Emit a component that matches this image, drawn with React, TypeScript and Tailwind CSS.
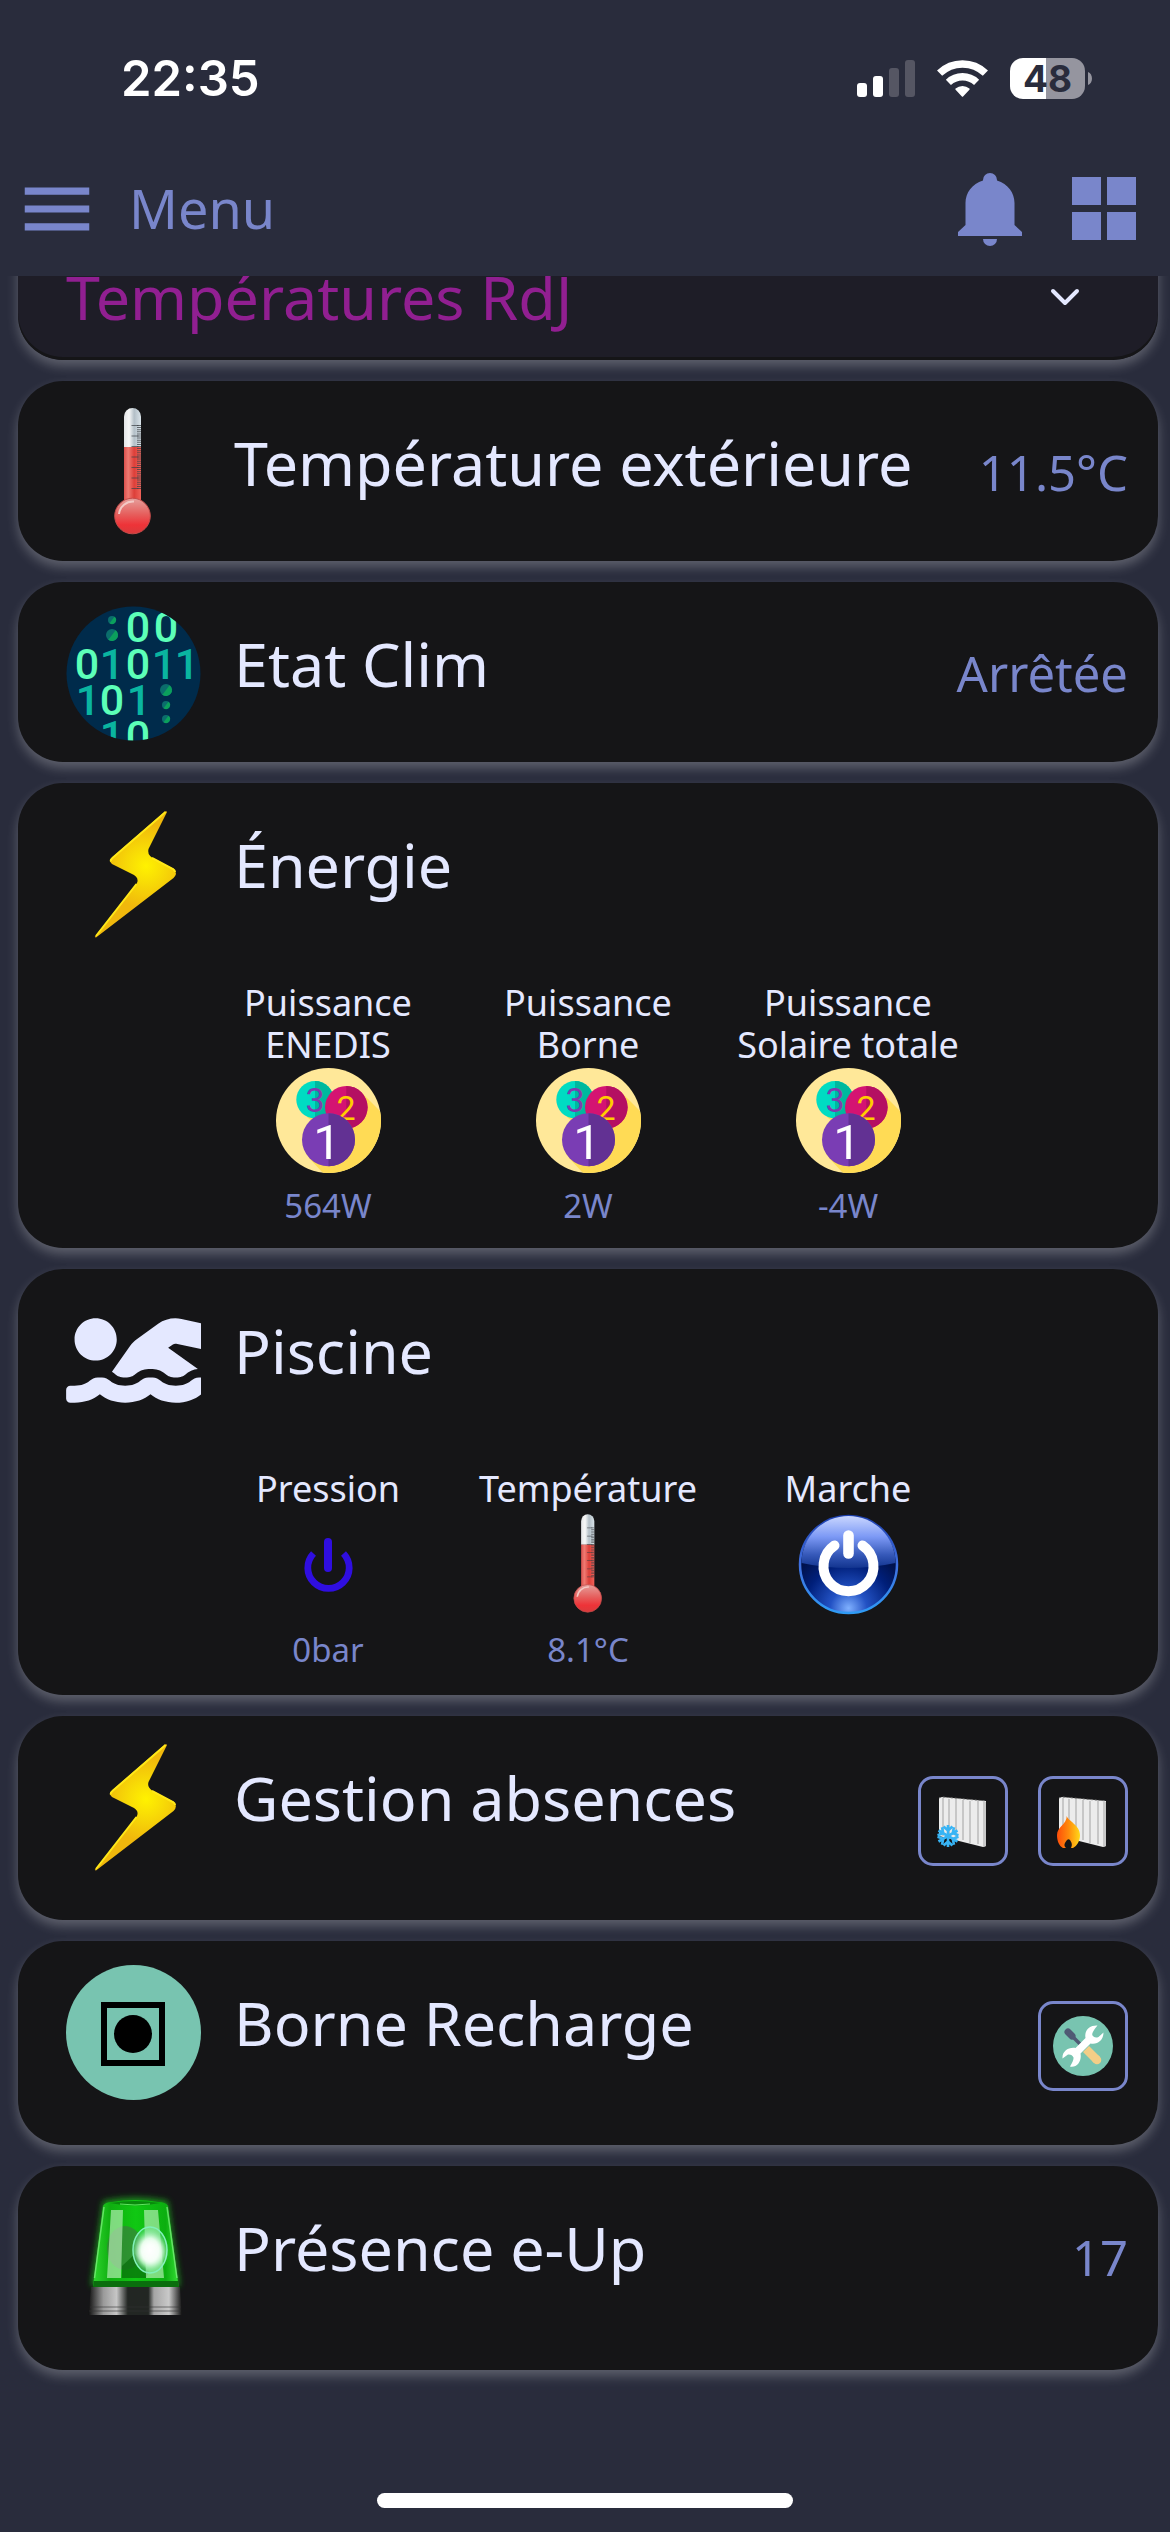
import React, { useId } from "react";
import { FaSwimmer } from "react-icons/fa";
import { MdMenu } from "react-icons/md";

const StatusBar = () => (
  <div className="flex h-[141px] items-center justify-between pt-4 pl-[121px] pr-[78px]">
    <p className="font-['Inter'] text-[49px] leading-[60px] font-semibold text-white">
      22:35
    </p>
    <div className="flex items-center">
      <svg width="58" height="38" viewBox="0 0 58 38">
        <rect x="0" y="23" width="10" height="14" rx="3" fill="#fff" />
        <rect x="16" y="16" width="10" height="21" rx="3" fill="#fff" />
        <rect x="32" y="8" width="10" height="29" rx="3" fill="#555663" />
        <rect x="48" y="0" width="10" height="37" rx="3" fill="#555663" />
      </svg>
      <svg className="ml-[22px]" width="51" height="38" viewBox="0 0 51 38">
        <g fill="none" stroke="#fff" strokeWidth="7.4">
          <path d="M2.6 13.2a33 33 0 0 1 45.8 0" />
          <path d="M11.4 22.4a20.5 20.5 0 0 1 28.2 0" />
        </g>
        <path
          d="M18.6 28.6a10.5 10.5 0 0 1 13.8 0 .8 .8 0 0 1 0 1.2l-6.3 6.6a.9 .9 0 0 1-1.2 0l-6.3-6.6a.8 .8 0 0 1 0-1.2Z"
          fill="#fff"
        />
      </svg>
      <div className="ml-[22px] flex items-center">
        <div className="flex h-[41px] w-[75px] items-center justify-center rounded-[13px] bg-[linear-gradient(90deg,#fff_48%,#95959f_48%)] font-['Inter'] text-[37px] leading-[41px] font-bold text-[#292c3c]">
          48
        </div>
        <svg className="ml-[3px]" width="4" height="13" viewBox="0 0 4 13">
          <path d="M0 0c5.300 2 5.300 11 0 13Z" fill="#95959f" />
        </svg>
      </div>
    </div>
  </div>
);

const Header = () => (
  <header className="relative z-10 bg-[#292c3c]">
    <StatusBar />
    <div className="flex h-[135px] items-center justify-between pl-[14px] pr-[34px] text-[#7986cb]">
      <button type="button" className="flex items-center gap-[29px]">
        <MdMenu size={86} />
        <span className="pb-0.5 text-[54px] leading-[72px]">Menu</span>
      </button>
      <div className="flex items-center gap-[50px]">
        <button type="button" aria-label="Notifications">
          <svg width="64" height="74" viewBox="0 0 64 74" fill="currentColor">
            <path d="M25 8a7 7 0 0 1 14 0v.6C50 12 56.500 21 56.500 31v22l7.500 7v4H0v-4l7.500-7V31C7.500 21 14 12 25 8.600Z" />
            <path d="M25 67h14a7 7 0 0 1-14 0Z" />
          </svg>
        </button>
        <button type="button" aria-label="Vues">
          <svg width="64" height="64" viewBox="0 0 64 64" fill="currentColor">
            <path d="M0 0h29v28H0zM35 0h29v28H35zM0 35h29v28H0zM35 35h29v28H35z" />
          </svg>
        </button>
      </div>
    </div>
  </header>
);

const Thermometer = ({ size = 135 }: { size?: number }) => {
  const id = useId();
  return (
    <svg width={size} height={size} viewBox="0 0 135 135">
      <defs>
        <linearGradient id={`${id}g`}>
          <stop offset="0" stopColor="#e2e4e6" />
          <stop offset=".3" stopColor="#f7f8f8" />
          <stop offset=".6" stopColor="#b3bfc7" />
          <stop offset="1" stopColor="#d9e3e9" />
        </linearGradient>
        <linearGradient id={`${id}r`}>
          <stop offset="0" stopColor="#d9504d" />
          <stop offset=".25" stopColor="#ef7a72" />
          <stop offset=".6" stopColor="#dd3f39" />
          <stop offset="1" stopColor="#ef6259" />
        </linearGradient>
        <linearGradient id={`${id}b`} x2="0" y2="1">
          <stop offset="0" stopColor="#e6a09c" />
          <stop offset=".45" stopColor="#e65f5d" />
          <stop offset=".75" stopColor="#ee3338" />
          <stop offset="1" stopColor="#d93a3c" />
        </linearGradient>
      </defs>
      <path d="M58 42V11.500a8.500 8.500 0 0 1 17 0V42Z" fill={`url(#${id}g)`} />
      <path d="M58 42h17v58H58Z" fill={`url(#${id}r)`} />
      <path d="M73 20v65" stroke="#3c4146" strokeWidth="4" strokeDasharray="1 1.100" opacity=".75" />
      <path d="M69 20v65" stroke="#3c4146" strokeWidth="7" strokeDasharray="1 9.500" opacity=".7" />
      <circle cx="66.500" cy="111" r="17.800" fill={`url(#${id}b)`} stroke="#c54b49" />
      <path d="M53 109a14 14 0 0 1 15-12.500" stroke="#f3c9c5" strokeWidth="2" fill="none" />
    </svg>
  );
};

const Bolt = () => {
  const id = useId();
  return (
    <svg width="135" height="135" viewBox="0 0 135 135">
      <defs>
        <radialGradient id={id} gradientUnits="userSpaceOnUse" cx="80" cy="59" r="42">
          <stop offset="0" stopColor="#fff200" />
          <stop offset=".4" stopColor="#f8dc06" />
          <stop offset="1" stopColor="#f0b80c" />
        </radialGradient>
      </defs>
      <path
        d="M99 4.600 46 50.500Q42.500 54 46 57L68 68Q73 71 71 76L28.700 130 30 130.500 107.500 71Q112 66.500 108 62L86 50.500Q81 47 82.500 42L101 5Q100.500 3.500 99 4.600Z"
        fill={`url(#${id})`}
      />
      <path
        d="M99.500 5 47 50.500Q44 53 45 54.500M70.500 77 30 129M86 51l21 11q2 1.500 2 3"
        stroke="#ffe818"
        strokeWidth="2"
        fill="none"
      />
    </svg>
  );
};

const Binary = () => {
  const id = useId();
  const zeros = [[72, 36], [100, 36], [21, 73], [72, 73], [46, 109], [72, 145]];
  const ones = [[46, 73], [98, 73], [121, 73], [22, 109], [73, 109], [46, 145]];
  const dots = [[46, 14, 4], [46, 29, 6], [100, 84, 6], [100, 99, 4], [100, 113, 4]];
  return (
    <svg width="135" height="135" viewBox="0 0 135 135">
      <clipPath id={id}>
        <circle cx="67.500" cy="67.500" r="67" />
      </clipPath>
      <g
        clipPath={`url(#${id})`}
        textAnchor="middle"
        className="font-['Roboto'] text-[43px] font-medium"
      >
        <rect width="135" height="135" fill="#002b4b" />
        {zeros.map(([x, y]) => (
          <text key={`${x}-${y}`} x={x} y={y} fill="#5cffb8">0</text>
        ))}
        {ones.map(([x, y]) => (
          <text key={`${x}-${y}`} x={x} y={y} fill="#0ab5a0">1</text>
        ))}
        {dots.map(([x, y, r]) => (
          <g key={y}>
            <circle cx={x} cy={y} r={r} fill="#0b6d6c" />
            <path
              d={`M${x - r * 0.6} ${y + r * 0.8}A${r} ${r} 0 0 0 ${x + r * 0.6} ${y - r * 0.8}Z`}
              fill="#0ba05c"
            />
          </g>
        ))}
      </g>
    </svg>
  );
};

const Numbers = () => {
  const id = useId();
  return (
    <svg width="105" height="105" viewBox="0 0 105 105" textAnchor="middle" className="font-['Roboto']">
      <clipPath id={id}>
        <circle cx="52.500" cy="52.500" r="52.500" />
      </clipPath>
      <g clipPath={`url(#${id})`}>
        <rect width="105" height="105" fill="#ffe899" />
        <path d="M86 25 140 79 80 140 33 90Z" fill="#ffdb55" />
      </g>
      <path d="M31 49l5 4 5-5Z" fill="#ffdb55" />
      <circle cx="39" cy="31.700" r="18.700" fill="#00dcc2" />
      <path d="M39 13a18.700 18.700 0 0 1 0 37.400Z" fill="#00b89e" />
      <text x="39" y="44" fill="#7d3cb0" className="text-[34px]">3</text>
      <circle cx="70.300" cy="39.300" r="21.300" fill="#d41372" />
      <path d="M70.300 18a21.300 21.300 0 0 1 0 42.600Z" fill="#b40f62" />
      <text x="70" y="52" fill="#ffcc00" className="text-[34px]">2</text>
      <circle cx="52.500" cy="71.700" r="26.500" fill="#7a3db4" />
      <path d="M52.500 45.200a26.500 26.500 0 0 1 0 53Z" fill="#623193" />
      <text x="51" y="91" fill="#fff" className="text-[49px]">1</text>
    </svg>
  );
};

const Power = () => (
  <svg width="105" height="105" viewBox="0 0 105 105" fill="none" stroke="#2f0ee0">
    <path d="M37.500 41.500a20.700 20.700 0 1 0 30 0" strokeWidth="6.800" />
    <path d="M52 30v26" strokeWidth="8" strokeLinecap="round" />
  </svg>
);

const PowerBall = () => {
  const id = useId();
  return (
    <svg width="105" height="105" viewBox="0 0 105 105">
      <defs>
        <linearGradient id={`${id}t`} x2="0" y2="1">
          <stop offset="0" stopColor="#c9d6ff" />
          <stop offset=".4" stopColor="#7c99f5" />
          <stop offset=".75" stopColor="#3558b8" />
          <stop offset="1" stopColor="#12348f" />
        </linearGradient>
        <radialGradient id={`${id}b`} cx=".5" cy=".95" r=".75">
          <stop offset="0" stopColor="#7fb0ff" />
          <stop offset=".25" stopColor="#2352c4" />
          <stop offset=".6" stopColor="#001f7a" />
          <stop offset="1" stopColor="#000a33" />
        </radialGradient>
        <linearGradient id={`${id}s`} x2="0" y2="1">
          <stop offset="0" stopColor="#1c3fae" />
          <stop offset=".5" stopColor="#3f6fe0" />
          <stop offset="1" stopColor="#2f9bf5" />
        </linearGradient>
      </defs>
      <circle cx="52.500" cy="52.500" r="48.500" fill={`url(#${id}b)`} stroke={`url(#${id}s)`} strokeWidth="2.500" />
      <path d="M5.500 51a47 47 0 0 1 94 0Q52 61 5.500 51Z" fill={`url(#${id}t)`} />
      <g fill="none" stroke="#fff" strokeLinecap="round">
        <path d="M38.500 33.500a25 25 0 1 0 28 0" strokeWidth="10" />
        <path d="M52.500 23.500v18" strokeWidth="10.600" />
      </g>
    </svg>
  );
};

const RadiatorPanel = () => (
  <>
    <path d="M6 7 9 6 53 10v45l-3 1L6 45Z" fill="#ececec" />
    <path d="M50 11h3v44l-3 1Z" fill="#c9c9c9" />
    <path d="M10 7v38M16 8v38M23 8v40M30 9v40M37 10v42M45 10v43" stroke="#a2a2a2" />
    <path d="M6 7 9 6 53 10" stroke="#777" fill="none" strokeDasharray="2 2" />
  </>
);

const RadiatorCold = () => (
  <svg width="60" height="60" viewBox="0 0 60 60">
    <RadiatorPanel />
    <g stroke="#37b4f5" strokeWidth="2.600" fill="none">
      {[0, 60, 120, 180, 240, 300].map((angle) => (
        <path key={angle} d="M15 45V34M10.500 35.500 15 39.500 19.500 35.500" transform={`rotate(${angle} 15 45)`} />
      ))}
    </g>
  </svg>
);

const RadiatorHot = () => {
  const id = useId();
  return (
    <svg width="60" height="60" viewBox="0 0 60 60">
      <linearGradient id={id}>
        <stop offset="0" stopColor="#fd4d0a" />
        <stop offset=".5" stopColor="#ff8a0c" />
        <stop offset="1" stopColor="#ffd91a" />
      </linearGradient>
      <RadiatorPanel />
      <path d="M11 57c2-6 2-10 5-11 4 2 4 6 2 11Z" fill="#151517" />
      <path
        d="M13.700 25C15 30 27 34 27 44c0 6-3 11-7 13h-2c2-4 0-6-1-8-1-1-2-1-3 0-2 3-4 5-1 8h-3C6 55 4 50 4 44c0-8 10-11 9.700-19Z"
        fill={`url(#${id})`}
      />
    </svg>
  );
};

const Tools = () => (
  <svg width="60" height="60" viewBox="0 0 60 60">
    <circle cx="30" cy="30" r="30" fill="#78c4b0" />
    <path d="M15 16l4 4" stroke="#4f5a74" strokeWidth="7" strokeLinecap="round" />
    <path d="M18 19l12 12" stroke="#4f5a74" strokeWidth="3.500" />
    <path d="M33 33l11 11" stroke="#f3ce87" strokeWidth="8.500" />
    <path d="M43 43l1 1" stroke="#f3ce87" strokeWidth="8.500" strokeLinecap="round" />
    <path
      d="M44.500 9.500C37 9 31 14 32.500 22L22.500 32C15 31 9 35.500 9.500 42.500L15 38.500Q19 38 20.500 41.500 21 44 17 50.500C24 52 29 45 27.500 37.500L37.500 27.500C44 29 50.500 24.500 50.500 16.500L45.500 21Q41.500 22.500 39.500 19.500 38 17 44.500 9.500Z"
      fill="#fff"
    />
  </svg>
);

const ChargePoint = () => (
  <svg width="135" height="135" viewBox="0 0 135 135">
    <circle cx="67.500" cy="67.500" r="67.500" fill="#78c4b0" />
    <rect x="38" y="40" width="58" height="58" fill="none" stroke="#000" strokeWidth="6" />
    <circle cx="67" cy="69" r="19" />
  </svg>
);

const Beacon = () => {
  const id = useId();
  return (
    <svg width="135" height="135" viewBox="0 0 135 135">
      <defs>
        <linearGradient id={`${id}d`}>
          <stop offset="0" stopColor="#2fd62f" />
          <stop offset=".2" stopColor="#0fae10" />
          <stop offset=".5" stopColor="#10c813" />
          <stop offset=".85" stopColor="#0cae10" />
          <stop offset="1" stopColor="#35dd35" />
        </linearGradient>
        <linearGradient id={`${id}m`}>
          <stop offset="0" stopColor="#111" />
          <stop offset=".16" stopColor="#9a9a9a" />
          <stop offset=".3" stopColor="#c6c6c6" />
          <stop offset=".42" stopColor="#222623" />
          <stop offset=".64" stopColor="#222623" />
          <stop offset=".7" stopColor="#a5a5a5" />
          <stop offset=".86" stopColor="#c9c9c9" />
          <stop offset="1" stopColor="#111" />
        </linearGradient>
        <radialGradient id={`${id}l`}>
          <stop offset="0" stopColor="#fff" />
          <stop offset=".5" stopColor="#d5fbdc" />
          <stop offset="1" stopColor="#5fe388" stopOpacity=".3" />
        </radialGradient>
        <filter id={`${id}f`} x="-20%" y="-20%" width="140%" height="140%">
          <feGaussianBlur stdDeviation="3" />
        </filter>
      </defs>
      <path d="M37 11Q69 4 102 11L114 96H25Z" fill="#1fb01f" opacity=".8" filter={`url(#${id}f)`} />
      <path d="M25 97h89l2 28H22.500Z" fill={`url(#${id}m)`} />
      <path d="M24 117h91M23 121h92" stroke="#333" opacity=".6" />
      <path d="M37 16Q39 12 46 12 69 8 92 12 100 12 102 16L112.500 96H27Z" fill={`url(#${id}d)`} />
      <path d="M44 13q25-4 50 0-25 5-50 0Z" fill="#0a8a0d" />
      <path d="M54 14q15 2 30 0" stroke="#5fe95f" fill="none" />
      <ellipse cx="59" cy="58" rx="18" ry="22" fill="#3d7a40" opacity=".65" />
      <path d="M56 76l13-12 14 18-3 6H56Z" fill="#076b0a" opacity=".7" />
      <path d="M45 20h12l-2 68H41ZM78 20h14l6 68H80Z" fill="#c9f7c9" opacity=".6" />
      <ellipse cx="84" cy="60" rx="17" ry="23" fill={`url(#${id}l)`} stroke="#7ff0b8" strokeWidth="1.500" />
      <circle cx="85" cy="62" r="13" fill="#fff" opacity=".8" filter={`url(#${id}f)`} />
      <path d="M27.500 91h84.500l1 6H27Z" fill="#0a6e0d" />
      <path d="M38 17 28.500 88M101 17l10 71" stroke="#85f085" strokeWidth="1.500" opacity=".7" />
    </svg>
  );
};

const cardClass = "rounded-[45px] bg-[#151517] pl-12 pr-[30px] pt-6 shadow-[0_6px_12px_rgba(255,255,255,0.25)]";

type CardProps = {
  icon: React.ReactNode;
  title: string;
  value?: string;
  actions?: React.ReactNode;
  children?: React.ReactNode;
  className: string;
};

const Card = ({ icon, title, value, actions, children, className }: CardProps) => (
  <section className={`${cardClass} ${className}`}>
    <div className="flex h-[135px] items-center">
      <div className="h-[135px] w-[135px] shrink-0 overflow-hidden">{icon}</div>
      <h2 className="ml-[33px] flex-1 pb-5 text-[61px] leading-[84px] text-[#e4e8ff]">{title}</h2>
      {value && <p className="pb-0.5 text-[49px] leading-[66px] text-[#7986cb]">{value}</p>}
      {actions && <div className="mt-9 flex gap-[30px] self-start">{actions}</div>}
    </div>
    {children && <div className="-ml-[18px] mt-10 flex justify-center">{children}</div>}
  </section>
);

type ItemProps = {
  label: React.ReactNode;
  icon: React.ReactNode;
  value?: string;
};

const Item = ({ label, icon, value }: ItemProps) => (
  <div className="flex w-[260px] flex-col items-center text-center">
    <p className="text-[36px] leading-[42px] text-[#e4e8ff]">{label}</p>
    <div className="mt-0.5">{icon}</div>
    <p className="mt-3 h-[41px] text-[33px] leading-[42px] text-[#7986cb]">{value}</p>
  </div>
);

const ActionButton = ({ label, children }: { label: string; children: React.ReactNode }) => (
  <button
    type="button"
    aria-label={label}
    className="flex h-[90px] w-[90px] items-center justify-center rounded-[15px] border-[3px] border-[#7986cb]"
  >
    {children}
  </button>
);

const App = () => {
  return (
    <div className="flex min-h-screen flex-col bg-[#292c3c] font-['Noto_Sans',sans-serif]">
      <Header />
      <main className="flex flex-1 flex-col gap-[21px] pl-[18px] pr-3">
        <button
          type="button"
          className="-mt-9 flex h-[120px] items-center justify-between rounded-b-[45px] bg-[#1e1d27] pb-1 pl-12 pr-[78px] shadow-[inset_0_-3px_0_#151517,0_6px_12px_rgba(255,255,255,0.25)]"
        >
          <span className="pb-0.5 text-[61px] leading-[84px] text-[#911f91]">Températures RdJ</span>
          <svg width="30" height="20" viewBox="0 0 30 20">
            <path
              d="M3 3l12 12L27 3"
              fill="none"
              stroke="#e4e8ff"
              strokeWidth="4"
              strokeLinecap="round"
              strokeLinejoin="round"
            />
          </svg>
        </button>

        <Card className="pb-[21px]" icon={<Thermometer />} title="Température extérieure" value="11.5°C" />
        <Card className="pb-[21px]" icon={<Binary />} title="Etat Clim" value="Arrêtée" />

        <Card className="pb-[22px]" icon={<Bolt />} title="Énergie">
          <Item label={<>Puissance<br />ENEDIS</>} icon={<Numbers />} value="564W" />
          <Item label={<>Puissance<br />Borne</>} icon={<Numbers />} value="2W" />
          <Item label={<>Puissance<br />Solaire totale</>} icon={<Numbers />} value="-4W" />
        </Card>

        <Card
          className="pb-[25px]"
          icon={<FaSwimmer className="h-[135px] w-[169px] max-w-none text-[#e4e8ff]" />}
          title="Piscine"
        >
          <Item label="Pression" icon={<Power />} value="0bar" />
          <Item label="Température" icon={<Thermometer size={105} />} value="8.1°C" />
          <Item label="Marche" icon={<PowerBall />} />
        </Card>

        <Card
          className="pb-[45px]"
          icon={<Bolt />}
          title="Gestion absences"
          actions={
            <>
              <ActionButton label="Mode hors gel">
                <RadiatorCold />
              </ActionButton>
              <ActionButton label="Mode chauffage">
                <RadiatorHot />
              </ActionButton>
            </>
          }
        />
        <Card
          className="pb-[45px]"
          icon={<ChargePoint />}
          title="Borne Recharge"
          actions={
            <ActionButton label="Réglages">
              <Tools />
            </ActionButton>
          }
        />
        <Card className="pb-[45px]" icon={<Beacon />} title="Présence e-Up" value="17" />
      </main>
      <footer className="flex justify-center pb-6">
        <div className="h-[15px] w-[416px] rounded-full bg-white" />
      </footer>
    </div>
  );
};

export default App;
